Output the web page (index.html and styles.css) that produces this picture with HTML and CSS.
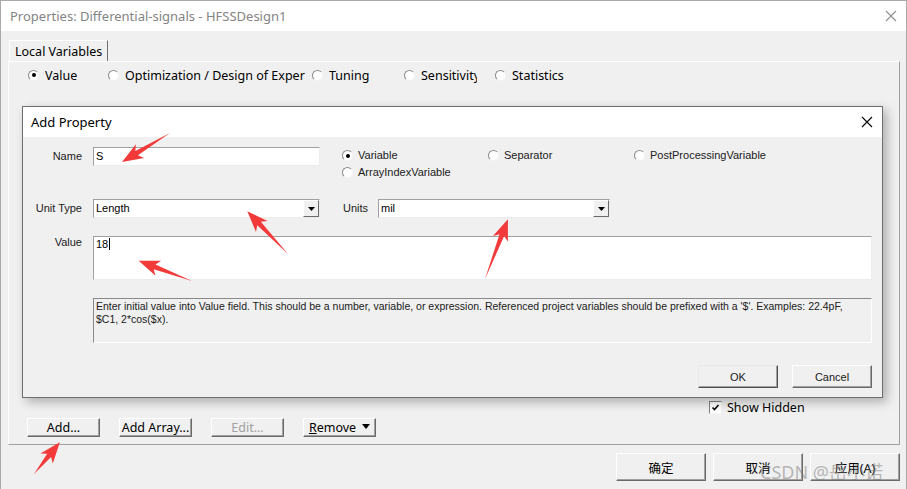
FILE: index.html
```html
<!DOCTYPE html>
<html>
<head>
<meta charset="utf-8">
<link rel="stylesheet" href="styles.css">
</head>
<body>
<div class="win">
  <div class="titlebar">
    <span class="title">Properties: Differential-signals - HFSSDesign1</span>
    <svg class="xbtn" width="12" height="12" viewBox="0 0 12 12"><path d="M1 1L11 11M11 1L1 11" stroke="#8e8e8e" stroke-width="1.1" fill="none"/></svg>
  </div>
  <div class="client">
    <div class="tabstrip"><div class="tab">Local Variables</div></div>
    <div class="panel">
      <div class="radiorow">
        <div class="ropt w80"><span class="radio on"></span><span class="rtext">Value</span></div>
        <div class="ropt w204"><span class="radio"></span><span class="rtext">Optimization / Design of Exper</span></div>
        <div class="ropt w92"><span class="radio"></span><span class="rtext">Tuning</span></div>
        <div class="ropt w91"><span class="radio"></span><span class="rtext clip56">Sensitivity</span></div>
        <div class="ropt"><span class="radio"></span><span class="rtext">Statistics</span></div>
      </div>
      <div class="showhidden">
        <span class="check"><svg width="9" height="9" viewBox="0 0 9 9"><path d="M1.5 4.5L3.5 6.5L7.5 2" stroke="#000" stroke-width="1.6" fill="none"/></svg></span>
        <span>Show Hidden</span>
      </div>
      <div class="btnrow">
        <div class="btn mbtn">Add...</div>
        <div class="btn mbtn">Add Array...</div>
        <div class="btn mbtn disabled">Edit...</div>
        <div class="btn mbtn"><span><u>R</u>emove</span><svg class="tri" width="8" height="5" viewBox="0 0 8 5"><path d="M0 0H8L4 5Z" fill="#000"/></svg></div>
      </div>
    </div>
    <div class="footer">
      <div class="btn fbtn">确定</div>
      <div class="btn fbtn">取消</div>
      <div class="btn fbtn">应用(A)</div>
    </div>
  </div>

  <div class="dialog">
    <div class="dtitle">
      <span>Add Property</span>
      <svg class="dx" width="12" height="12" viewBox="0 0 12 12"><path d="M1 1L11 11M11 1L1 11" stroke="#000" stroke-width="1.1" fill="none"/></svg>
    </div>
    <div class="dbody">
      <div class="drow row1">
        <div class="dlabel">Name</div>
        <div class="field name">S</div>
        <div class="dradios">
          <div class="dopt"><span class="radio sm on"></span><span>Variable</span></div>
          <div class="dopt"><span class="radio sm"></span><span>Separator</span></div>
          <div class="dopt"><span class="radio sm"></span><span>PostProcessingVariable</span></div>
          <div class="dopt"><span class="radio sm"></span><span>ArrayIndexVariable</span></div>
        </div>
      </div>
      <div class="drow row2">
        <div class="dlabel">Unit Type</div>
        <div class="field combo c1"><span class="ctext">Length</span><span class="cbtn"><svg width="7" height="4" viewBox="0 0 7 4"><path d="M0 0H7L3.5 4Z" fill="#000"/></svg></span></div>
        <div class="ulabel">Units</div>
        <div class="field combo c2"><span class="ctext">mil</span><span class="cbtn"><svg width="7" height="4" viewBox="0 0 7 4"><path d="M0 0H7L3.5 4Z" fill="#000"/></svg></span></div>
      </div>
      <div class="drow row3">
        <div class="dlabel">Value</div>
        <div class="field valuebox">18<span class="caret"></span></div>
      </div>
      <div class="drow row4">
        <div class="info">Enter initial value into Value field. This should be a number, variable, or expression. Referenced project variables should be prefixed with a '$'. Examples: 22.4pF,<br>$C1, 2*cos($x).</div>
      </div>
      <div class="drow row5">
        <div class="btn dbtn okbtn">OK</div>
        <div class="btn dbtn">Cancel</div>
      </div>
    </div>
  </div>

  <svg class="annot" width="907" height="489" viewBox="0 0 907 489">
    <g fill="#f23a3a">
      <polygon transform="translate(170,133) rotate(148.9)" points="0,0 39,-2.5 35,-8 56,0 35,8 39,2.5"/>
      <polygon transform="translate(288,254) rotate(-133.6)" points="0,0 42,-2.5 38,-8 59,0 38,8 42,2.5"/>
      <polygon transform="translate(192,281) rotate(-159.3)" points="0,0 40,-2.5 36,-8 57,0 36,8 40,2.5"/>
      <polygon transform="translate(485,279) rotate(-69)" points="0,0 47,-2.5 43,-8 64,0 43,8 47,2.5"/>
      <polygon transform="translate(34,474) rotate(-50.9)" points="0,0 24,-2.5 20,-8 41,0 20,8 24,2.5"/>
    </g>
  </svg>
  <div class="watermark">CSDN @岳小诺</div>
</div>
</body>
</html>
```

FILE: styles.css
```css
* { box-sizing: border-box; }
html, body { margin: 0; padding: 0; }
body {
  width: 907px;
  height: 489px;
  overflow: hidden;
  background: #f0f0f0;
  font-family: "Noto Sans", "Noto Sans CJK SC", sans-serif;
  font-size: 12.5px;
  color: #000;
}
.win {
  position: relative;
  width: 907px;
  height: 489px;
  border: 1px solid #a9a9a9;
  border-bottom: none;
  display: flex;
  flex-direction: column;
}
.titlebar {
  height: 30px;
  flex: none;
  background: #fff;
  display: flex;
  align-items: center;
  justify-content: space-between;
  padding: 0 9px 0 9px;
}
.title { color: #848484; font-size: 13px; }
.client {
  flex: 1;
  display: flex;
  flex-direction: column;
  padding: 9px 6px 0 7px;
}
.tabstrip { display: flex; padding-left: 1px; }
.tab {
  height: 21px;
  padding: 0 5px 0 5px;
  border-left: 1px solid #fff;
  border-top: 1px solid #fff;
  border-right: 1px solid #6e6e6e;
  display: flex;
  align-items: center;
  white-space: nowrap;
}
.panel {
  height: 384px;
  border: 1px solid;
  border-color: #fff #a0a0a0 #a0a0a0 #fff;
  display: flex;
  flex-direction: column;
  padding: 4px 0 7px 0;
}
.radiorow {
  display: flex;
  align-items: center;
  height: 18px;
  padding-left: 19px;
}
.ropt { display: flex; align-items: center; flex: none; }
.ropt .radio { margin-right: 6px; }
.w80 { width: 80px; }
.w204 { width: 204px; }
.w92 { width: 92px; }
.w91 { width: 91px; }
.rtext { white-space: nowrap; overflow: hidden; }
.clip56 { width: 56px; }
.radio {
  flex: none;
  width: 11px;
  height: 11px;
  border-radius: 50%;
  background: #fff;
  border: 1px solid;
  border-color: #8a8a8a #f4f4f4 #f4f4f4 #8a8a8a;
  display: inline-flex;
  align-items: center;
  justify-content: center;
}
.radio.on::after {
  content: "";
  width: 4px;
  height: 4px;
  border-radius: 50%;
  background: #000;
}
.showhidden {
  margin-top: auto;
  display: flex;
  align-items: center;
  padding-left: 700px;
  height: 16px;
  margin-bottom: 3px;
}
.check {
  width: 13px;
  height: 13px;
  background: #fff;
  border: 1px solid;
  border-color: #808080 #f4f4f4 #f4f4f4 #808080;
  display: inline-flex;
  align-items: center;
  justify-content: center;
  margin-right: 5px;
}
.btnrow {
  display: flex;
  gap: 19px;
  padding-left: 18px;
}
.btn {
  background: #f0f0f0;
  border: 1px solid;
  border-color: #fff #6a6a6a #6a6a6a #fff;
  box-shadow: inset -1px -1px 0 #a0a0a0;
  display: flex;
  align-items: center;
  justify-content: center;
  white-space: nowrap;
}
.mbtn { width: 73px; height: 19px; font-size: 12.5px; }
.mbtn .tri { margin-left: 6px; margin-top: -3px; }
.disabled { color: #a0a0a0; }
.footer {
  display: flex;
  justify-content: flex-end;
  gap: 7px;
  margin-top: 8px;
}
.fbtn { width: 90px; height: 28px; font-size: 12.5px; }

/* dialog */
.dialog {
  position: absolute;
  left: 21px;
  top: 105px;
  width: 861px;
  height: 292px;
  border: 1px solid #6e6e6e;
  background: #f0f0f0;
  box-shadow: 4px 4px 10px rgba(0, 0, 0, 0.28);
  display: flex;
  flex-direction: column;
}
.dtitle {
  height: 30px;
  flex: none;
  background: #fff;
  display: flex;
  align-items: center;
  justify-content: space-between;
  padding: 0 9px 0 8px;
  font-size: 13px;
}
.dbody {
  flex: 1;
  padding: 10px 10px 0 0;
  font-family: "Liberation Sans", Arial, sans-serif;
  font-size: 11px;
  color: #202020;
}
.drow { display: flex; align-items: flex-start; }
.dlabel {
  width: 59px;
  text-align: right;
  margin-right: 11px;
  line-height: 19px;
  flex: none;
}
.field {
  background: #fff;
  border: 1px solid;
  border-color: #a0a0a0 #ececec #ececec #a0a0a0;
  height: 19px;
  line-height: 17px;
  padding-left: 2px;
  color: #000;
}
.name { width: 227px; }
.row1 { height: 52px; }
.dradios {
  margin-left: 22px;
  display: grid;
  grid-template-columns: 146px 146px auto;
  row-gap: 4px;
  line-height: 13px;
  padding-top: 2px;
}
.dopt { display: flex; align-items: center; }
.radio.sm { width: 11px; height: 11px; margin-right: 5px; }
.row2 { height: 19px; }
.combo { display: flex; justify-content: space-between; padding-left: 2px; }
.c1 { width: 227px; }
.c2 { width: 232px; }
.cbtn {
  width: 16px;
  height: 17px;
  background: #f0f0f0;
  border: 1px solid;
  border-color: #fff #6a6a6a #6a6a6a #fff;
  display: flex;
  align-items: center;
  justify-content: center;
}
.ulabel { margin-left: 23px; width: 35px; line-height: 19px; }
.row3 { margin-top: 18px; }
.row3 .dlabel { line-height: 13px; }
.valuebox { width: 780px; height: 44px; line-height: 13px; padding-top: 1px; }
.caret { display: inline-block; width: 1px; height: 12px; background: #000; vertical-align: -2px; margin-left: 1px; }
.row4 { margin-top: 18px; padding-left: 70px; }
.info {
  width: 780px;
  height: 45px;
  border: 1px solid;
  border-color: #8a8a8a #fff #fff #8a8a8a;
  padding: 1px 2px;
  line-height: 13px;
  font-size: 10.5px;
  color: #202020;
  white-space: nowrap;
  overflow: hidden;
}
.row5 { margin-top: 22px; justify-content: flex-end; gap: 14px; }
.dbtn { width: 80px; height: 23px; font-size: 11px; color: #202020; }
.okbtn { border-color: #e8e8e8 #505050 #505050 #e8e8e8; }

.annot { position: absolute; left: -1px; top: -1px; pointer-events: none; }
.watermark {
  position: absolute;
  left: 759px;
  top: 457px;
  font-size: 18px;
  color: rgba(120, 120, 120, 0.5);
  white-space: nowrap;
  pointer-events: none;
}
```
